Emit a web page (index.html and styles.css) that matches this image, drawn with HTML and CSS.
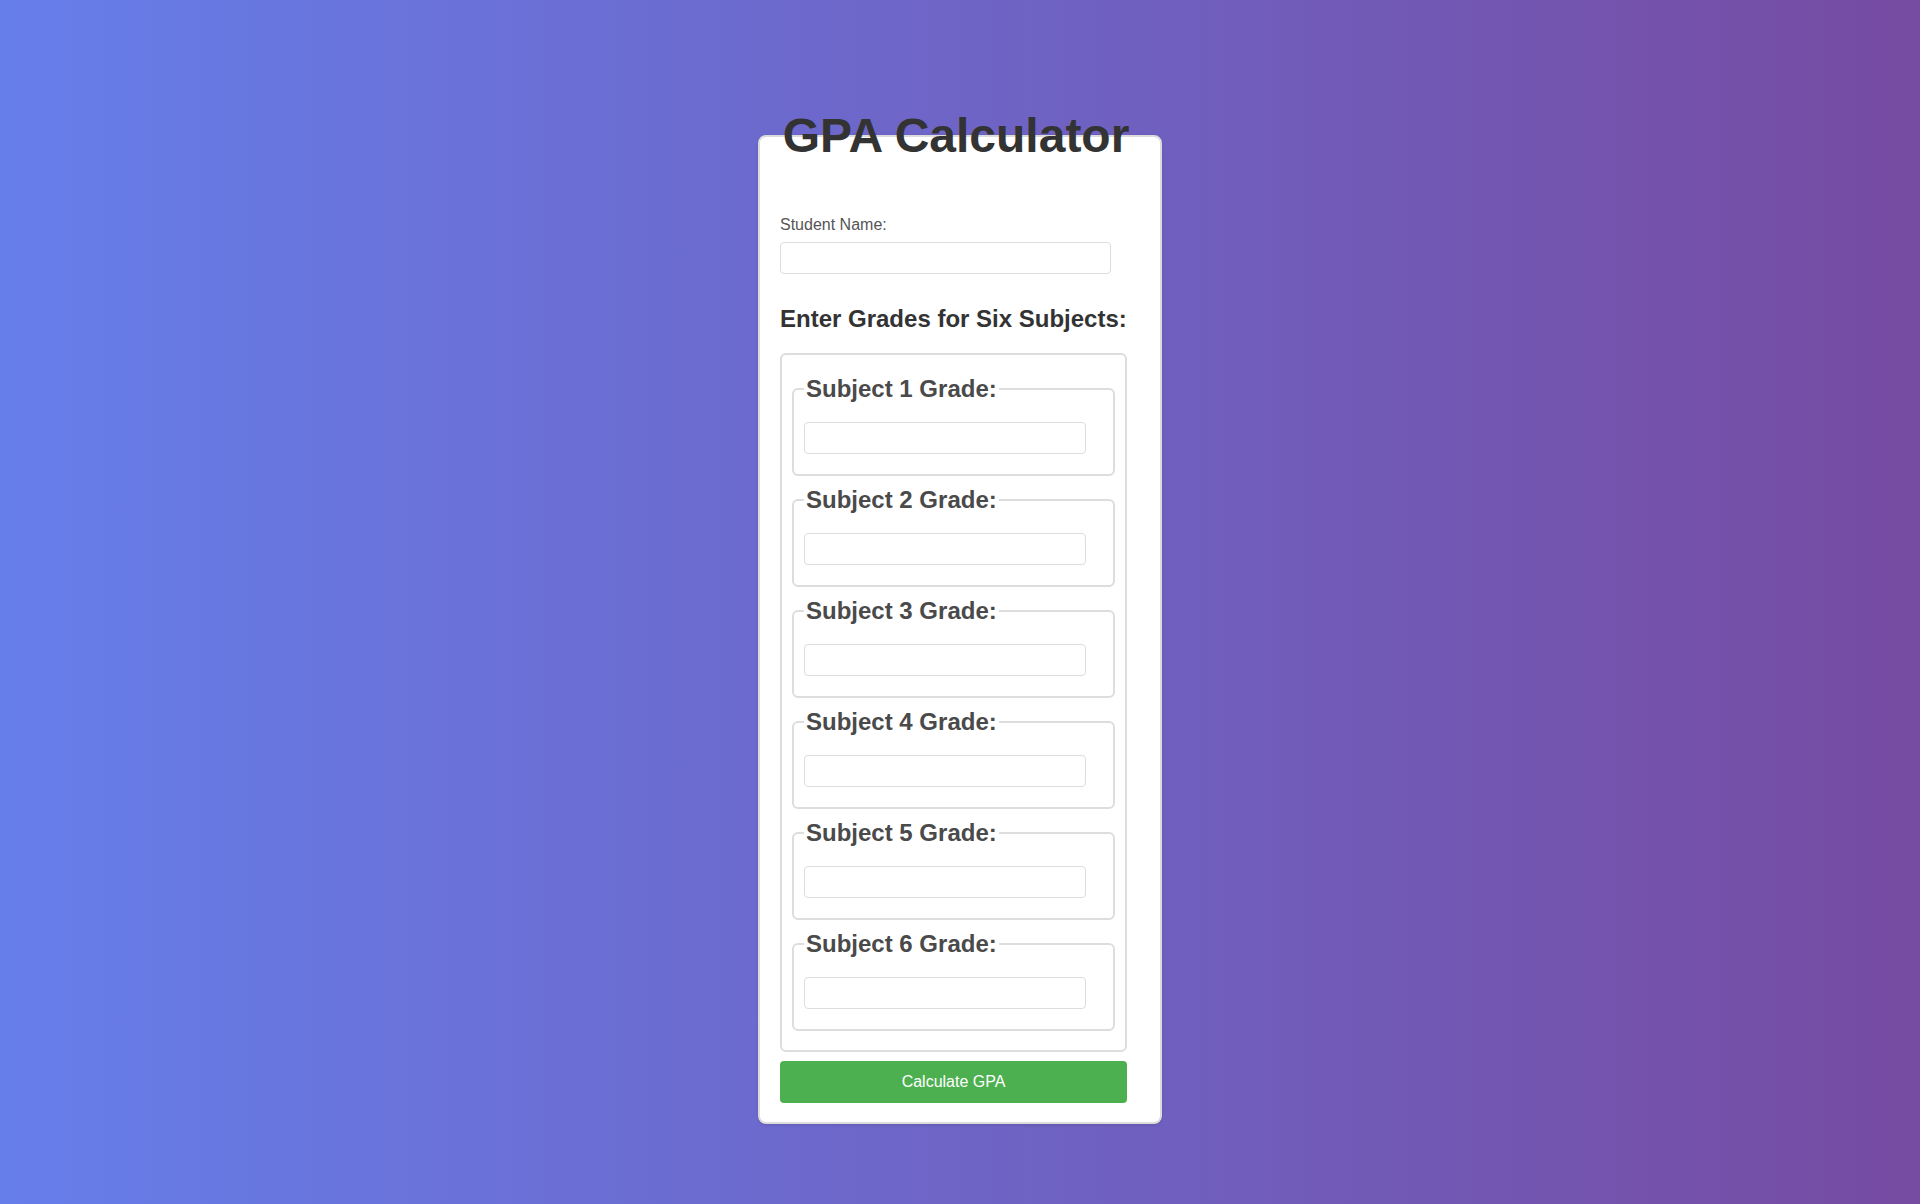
FILE: index.html
```html
<!DOCTYPE html>
<html lang="en">
<head>
<meta charset="utf-8">
<title>GPA Calculator</title>
<link rel="stylesheet" href="styles.css">
</head>
<body>
<div class="page">
  <div class="card">
    <h1 class="title">GPA Calculator</h1>
    <form class="form">
      <label class="name-label" for="student-name">Student Name:</label>
      <input class="text-input name-input" type="text" id="student-name">
      <h2 class="section-title">Enter Grades for Six Subjects:</h2>
      <fieldset class="grades">
        <fieldset class="subject">
          <legend class="subject-legend">Subject 1 Grade:</legend>
          <input class="text-input grade-input" type="text">
        </fieldset>
        <fieldset class="subject">
          <legend class="subject-legend">Subject 2 Grade:</legend>
          <input class="text-input grade-input" type="text">
        </fieldset>
        <fieldset class="subject">
          <legend class="subject-legend">Subject 3 Grade:</legend>
          <input class="text-input grade-input" type="text">
        </fieldset>
        <fieldset class="subject">
          <legend class="subject-legend">Subject 4 Grade:</legend>
          <input class="text-input grade-input" type="text">
        </fieldset>
        <fieldset class="subject">
          <legend class="subject-legend">Subject 5 Grade:</legend>
          <input class="text-input grade-input" type="text">
        </fieldset>
        <fieldset class="subject">
          <legend class="subject-legend">Subject 6 Grade:</legend>
          <input class="text-input grade-input" type="text">
        </fieldset>
      </fieldset>
      <button class="submit" type="button">Calculate GPA</button>
    </form>
  </div>
</div>
</body>
</html>
```

FILE: styles.css
```css
html, body {
  margin: 0;
  padding: 0;
}

body {
  min-height: 100vh;
  background: linear-gradient(to right, #667eea, #764ba2);
  font-family: "Liberation Sans", Arial, sans-serif;
  color: #333;
}

.page {
  display: flex;
  justify-content: center;
  padding-top: 135px;
  padding-bottom: 40px;
}

.card {
  box-sizing: border-box;
  width: 404px;
  background: #fff;
  border: 2px solid #dcdcdc;
  border-radius: 8px;
  padding: 20px 20px 19px;
  box-shadow: 0 1px 3px rgba(0, 0, 0, 0.12);
}

.title {
  margin: -49px 0 53px;
  padding-right: 8px;
  font-size: 48px;
  font-weight: bold;
  color: #333;
  text-align: center;
}

.form {
  margin: 0;
}

.name-label {
  display: block;
  font-size: 16px;
  color: #555;
  margin-bottom: 8px;
}

.text-input {
  display: block;
  box-sizing: border-box;
  height: 32px;
  margin: 0;
  padding: 8px;
  border: 1px solid #ddd;
  border-radius: 4px;
  background: #fff;
  font-family: inherit;
  font-size: 14px;
}

.name-input {
  width: 331px;
}

.section-title {
  margin: 31px 0 20px;
  font-size: 24px;
  font-weight: bold;
  color: #333;
}

.grades {
  box-sizing: border-box;
  width: 347px;
  margin: 0;
  padding: 20px 10px 9px;
  border: 2px solid #ddd;
  border-radius: 6px;
}

.subject {
  margin: 0 0 10px;
  padding: 19px 10px 20px;
  border: 2px solid #ddd;
  border-radius: 6px;
}

.subject-legend {
  padding: 0 2px;
  font-size: 24px;
  font-weight: bold;
  color: #4a4a4a;
}

.grade-input {
  width: 282px;
}

.submit {
  display: block;
  box-sizing: border-box;
  width: 347px;
  height: 42px;
  margin-top: 9px;
  border: none;
  border-radius: 4px;
  background: #4caf50;
  color: #fff;
  font-family: inherit;
  font-size: 16px;
  cursor: pointer;
}
```
